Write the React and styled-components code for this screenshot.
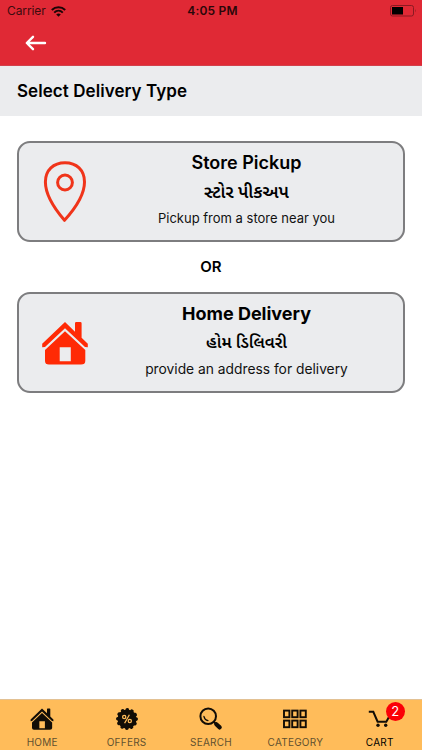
import React from 'react'
import styled, { createGlobalStyle } from 'styled-components'

const GlobalStyle = createGlobalStyle`
  * {
    box-sizing: border-box;
  }
  body {
    margin: 0;
    background: white;
    color: #000;
    font-family: Inter, "Noto Sans Gujarati", "Noto Sans", sans-serif;
  }
`

const Screen = styled.div`
  width: 422px;
  height: 750px;
  display: flex;
  flex-direction: column;
  overflow: hidden;
`

const Header = styled.header`
  height: 66px;
  background: #e02935;
  border-bottom: 1px solid #d2404b;
`

const StatusBar = styled.div`
  height: 22px;
  padding: 0 5px 0 7px;
  display: grid;
  grid-template-columns: 1fr auto 1fr;
  align-items: center;
  font-size: 12px;
  line-height: 22px;
  color: #3d0b0e;
`

const Carrier = styled.div`
  display: flex;
  align-items: center;
  gap: 5px;
  letter-spacing: -0.1px;
`

const Clock = styled.div`
  padding-left: 1px;
  font-weight: 600;
  letter-spacing: 0.2px;
  color: #2a0709;
`

const Battery = styled.div`
  display: flex;
  justify-content: flex-end;
`

const BackButton = styled.button`
  display: block;
  margin: 12px 0 0 25px;
  padding: 0;
  border: 0;
  background: none;
  height: 18px;

  svg {
    display: block;
  }
`

const TitleBar = styled.h1`
  margin: 0;
  height: 50px;
  padding-left: 17px;
  background: #ebecee;
  font-size: 17px;
  font-weight: 600;
  line-height: 51px;
  letter-spacing: 0.06px;
`

const Content = styled.main`
  flex: 1;
  padding: 25px 17px 0;
`

const Card = styled.div`
  height: 101px;
  display: flex;
  align-items: center;
  border: 2px solid #7d7d7f;
  border-radius: 13px;
  background: #ebecee;
`

const CardIcon = styled.div`
  width: 71px;
  padding-left: 22px;

  svg {
    display: block;
  }
`

const CardText = styled.div`
  flex: 1;
  height: 97px;
  padding-top: 9px;
  text-align: center;
  white-space: nowrap;
`

const CardTitle = styled.div`
  font-size: 18px;
  line-height: 22px;
  font-weight: ${(p) => p.$weight};
`

const LocalTitle = styled.div`
  height: 34px;
  font-size: ${(p) => p.$size}px;
  line-height: 35px;
  font-weight: 600;
`

const Hint = styled.div`
  font-size: ${(p) => p.$size}px;
  line-height: 20px;
  color: #111;
`

const Divider = styled.div`
  height: 50px;
  text-align: center;
  font-size: 15px;
  font-weight: 600;
  line-height: 50px;
`

const TabBar = styled.nav`
  height: 51px;
  display: grid;
  grid-template-columns: repeat(5, 1fr);
  background: #ffbc5a;
  border-top: 1px solid #e3c193;
`

const Tab = styled.div`
  display: flex;
  flex-direction: column;
  align-items: center;
  padding-top: 7px;
  font-size: 10px;
  line-height: 12px;
  letter-spacing: 0.25px;
  color: ${(p) => (p.$active ? '#000' : '#62512f')};
`

const TabIcon = styled.div`
  position: relative;
  height: 24px;
  margin-bottom: 5px;
  color: #120d06;

  svg {
    display: block;
  }
`

const Badge = styled.span`
  position: absolute;
  top: -5px;
  left: 18px;
  width: 19px;
  height: 19px;
  border-radius: 50%;
  background: #fb0007;
  color: white;
  font-size: 13px;
  line-height: 19px;
  text-align: center;
  letter-spacing: 0;
`

const WifiIcon = () => (
  <svg width="15" height="11" viewBox="0 0 15 11" fill="none" stroke="#1c0506" strokeWidth="2">
    <path d="M0.8 4C4.6 0.3 10.4 0.3 14.2 4" />
    <path d="M3.2 6.6C5.7 4.2 9.3 4.2 11.8 6.6" />
    <path d="M7.5 10.8L5.2 8.5C6.5 7.3 8.5 7.3 9.8 8.5Z" fill="#1c0506" stroke="none" />
  </svg>
)

const BatteryIcon = () => (
  <svg width="27" height="12" viewBox="0 0 27 12">
    <rect x="0.5" y="0.5" width="23" height="10.5" rx="2" fill="none" stroke="#8a1a22" />
    <rect x="2" y="2" width="11" height="7.5" fill="#000" />
    <path d="M25 4Q26.3 5.7 25 7.5Z" fill="#8a1a22" />
  </svg>
)

const ArrowIcon = () => (
  <svg width="22" height="18" viewBox="0 0 22 18" fill="none" stroke="#fff" strokeWidth="2.4" strokeLinecap="round" strokeLinejoin="round">
    <path d="M20 9H2M8 2.8L1.8 9L8 15.2" />
  </svg>
)

const PinIcon = () => (
  <svg width="48" height="64" viewBox="0 0 48 64" fill="none" stroke="#f0341a" strokeWidth="3" strokeLinejoin="round">
    <path d="M23.5 60.3C15.5 51 4.4 36 4.4 22C4.4 10 12.5 2.8 24 2.8C35.5 2.8 43.5 10 43.5 22C43.5 36 31.5 51.5 23.5 60.3Z" />
    <circle cx="24" cy="22.5" r="7.4" />
  </svg>
)

const HouseIcon = ({ size, color }) => (
  <svg width={size} height={size} viewBox="0 0 48 48" fill={color}>
    <path d="M24 3L1.2 24.8V28.3L4 28L24 9.2L44 28L46.8 28.3V24.8L40.6 18.8V4.3Q40.6 3 39.3 3H35.2Q34 3 34 4.3V12.7Z" />
    <path
      fillRule="evenodd"
      d="M24 12.2L4 31V42Q4 45.5 8 45.5H40Q44.3 45.5 44.3 42V31ZM18.7 28.3H29.8V42.3H18.7Z"
    />
  </svg>
)

const OffersIcon = () => (
  <svg width="24" height="24" viewBox="0 0 24 24">
    <circle cx="12" cy="12" r="9.6" fill="currentColor" />
    <circle cx="12" cy="12" r="9.2" fill="none" stroke="currentColor" strokeWidth="3.6" strokeLinecap="round" strokeDasharray="0.1 4.717" />
    <g fill="none" stroke="#ffbc5a" strokeWidth="1.3">
      <path d="M14.4 7.7L9.6 16.3" />
      <circle cx="9.2" cy="10" r="1.6" />
      <circle cx="14.8" cy="14" r="1.6" />
    </g>
  </svg>
)

const SearchIcon = () => (
  <svg width="24" height="24" viewBox="0 0 24 24" fill="none" stroke="currentColor" strokeLinecap="round">
    <circle cx="9.2" cy="9.2" r="7.8" strokeWidth="2" />
    <path d="M4.9 9.3Q5.6 12.8 9 13.6" strokeWidth="1.2" />
    <path d="M15 15L17 17" strokeWidth="2" />
    <path d="M17.3 17.2L20.7 20.4" strokeWidth="4.2" />
  </svg>
)

const CategoryIcon = () => (
  <svg width="24" height="24" viewBox="0 0 24 24" fill="none" stroke="currentColor" strokeWidth="1.9">
    {[1, 9.2, 17.4].map((x) => (
      <React.Fragment key={x}>
        <rect x={x} y="3.6" width="5.4" height="6.6" />
        <rect x={x} y="13.6" width="5.4" height="6.6" />
      </React.Fragment>
    ))}
  </svg>
)

const CartIcon = () => (
  <svg width="24" height="24" viewBox="0 0 24 24" fill="none" stroke="currentColor" strokeWidth="2">
    <path d="M0.8 4.8H5.3L9.6 14.7H18.3L22.4 7.5" />
    <circle cx="10" cy="18.3" r="1.7" fill="currentColor" stroke="none" />
    <circle cx="17.7" cy="18.3" r="1.7" fill="currentColor" stroke="none" />
  </svg>
)

const tabs = [
  { label: 'HOME', icon: <HouseIcon size={24} color="currentColor" /> },
  { label: 'OFFERS', icon: <OffersIcon /> },
  { label: 'SEARCH', icon: <SearchIcon /> },
  { label: 'CATEGORY', icon: <CategoryIcon /> },
  { label: 'CART', icon: <CartIcon />, badge: 2, active: true },
]

const App = () => (
  <Screen>
    <GlobalStyle />
    <Header>
      <StatusBar>
        <Carrier>
          Carrier
          <WifiIcon />
        </Carrier>
        <Clock>4:05 PM</Clock>
        <Battery>
          <BatteryIcon />
        </Battery>
      </StatusBar>
      <BackButton aria-label="Back">
        <ArrowIcon />
      </BackButton>
    </Header>
    <TitleBar>Select Delivery Type</TitleBar>
    <Content>
      <Card>
        <CardIcon>
          <PinIcon />
        </CardIcon>
        <CardText>
          <CardTitle $weight={600}>Store Pickup</CardTitle>
          <LocalTitle $size={17.5}>સ્ટોર પીકઅપ</LocalTitle>
          <Hint $size={13}>Pickup from a store near you</Hint>
        </CardText>
      </Card>
      <Divider>OR</Divider>
      <Card>
        <CardIcon>
          <HouseIcon size={48} color="#ff2a05" />
        </CardIcon>
        <CardText>
          <CardTitle $weight={700}>Home Delivery</CardTitle>
          <LocalTitle $size={16.5}>હોમ ડિલિવરી</LocalTitle>
          <Hint $size={13.8}>provide an address for delivery</Hint>
        </CardText>
      </Card>
    </Content>
    <TabBar>
      {tabs.map((tab) => (
        <Tab key={tab.label} $active={tab.active}>
          <TabIcon>
            {tab.icon}
            {tab.badge && <Badge>{tab.badge}</Badge>}
          </TabIcon>
          {tab.label}
        </Tab>
      ))}
    </TabBar>
  </Screen>
)

export default App
